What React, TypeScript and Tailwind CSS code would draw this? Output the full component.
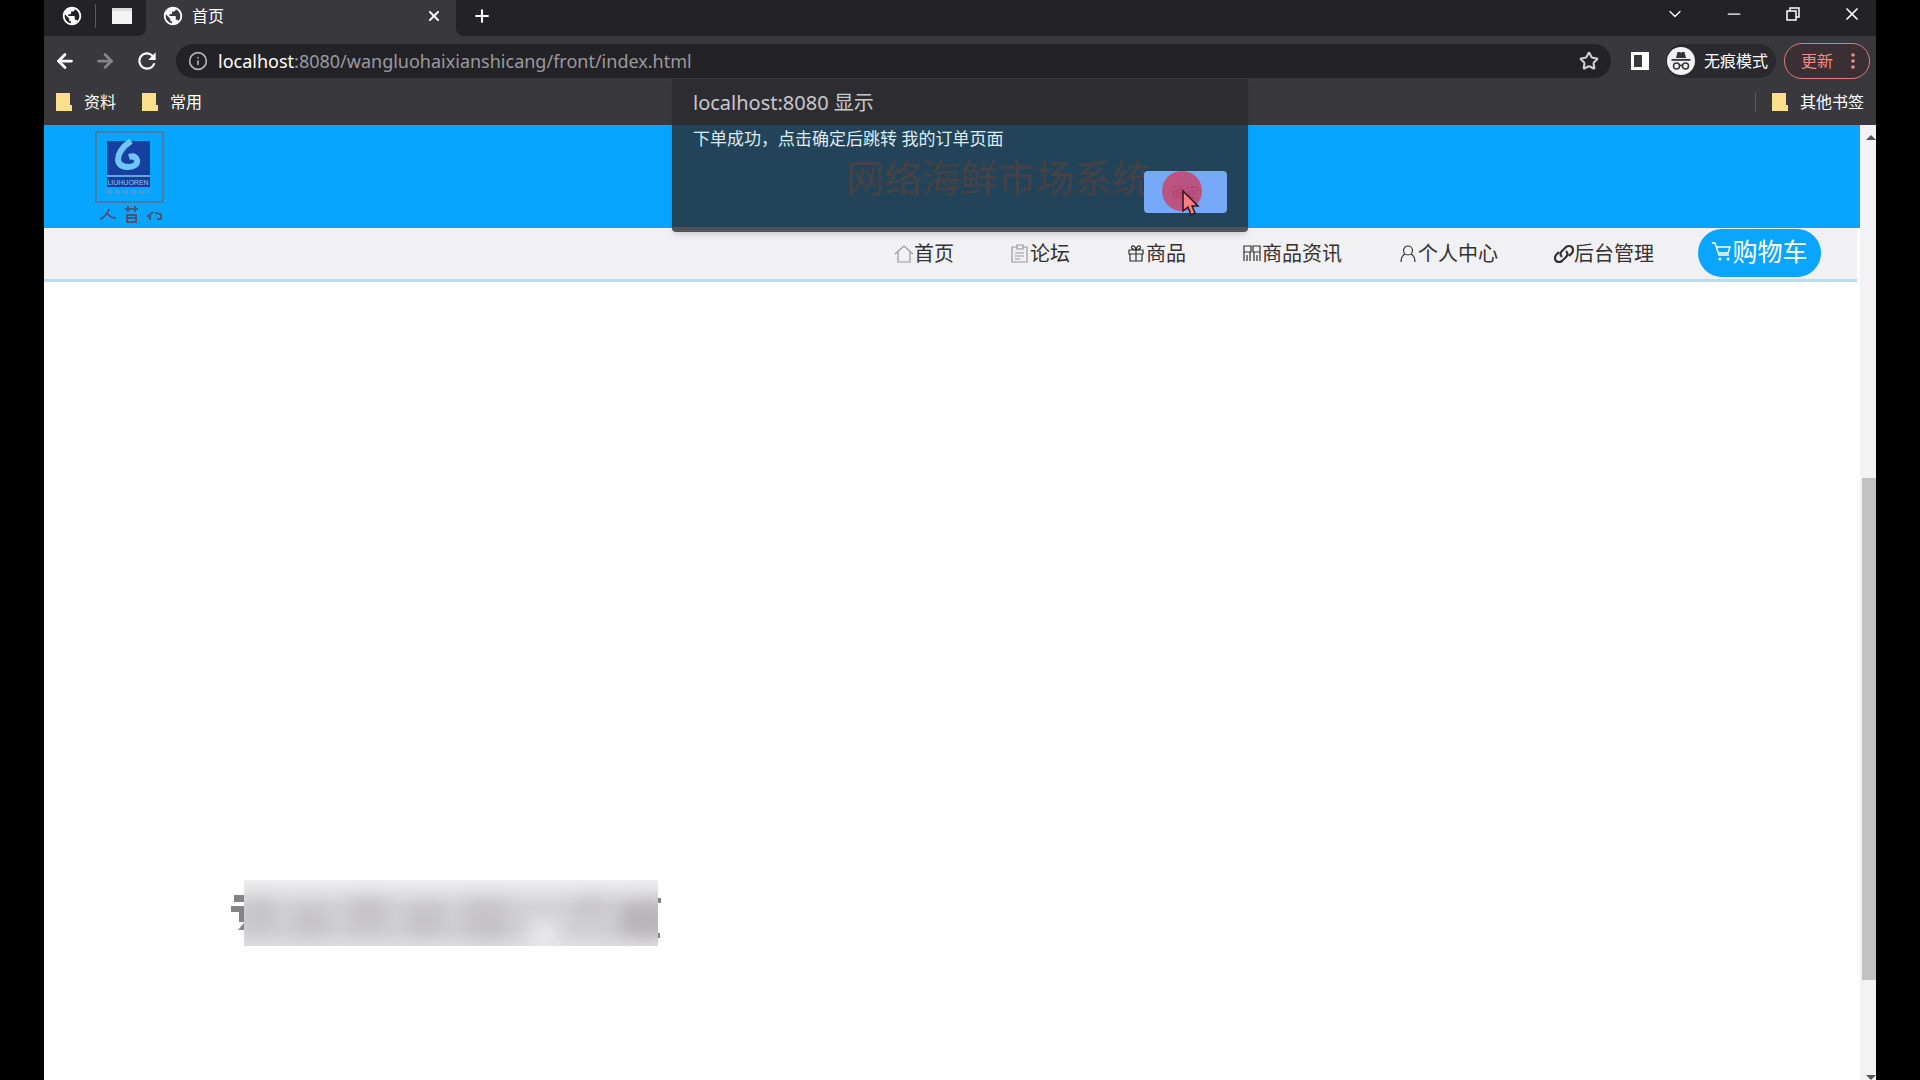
import { useState } from "react";
import type { ReactNode } from "react";
import { ArrowLeft, ArrowRight, Star, X, Plus, Minus, ChevronDown, Info } from "lucide-react";
import { MdRefresh, MdPublic } from "react-icons/md";

const uiFont = "font-['Noto_Sans','Noto_Sans_CJK_SC',sans-serif]";

const Folder = () => (
  <svg width="16" height="18" viewBox="0 0 16 18" aria-hidden="true">
    <path d="M0 0h14v12h2v6H0z" fill="#fbe08c" />
  </svg>
);

const Bookmark = ({ label }: { label: string }) => (
  <a href="#bookmark" className="flex items-center gap-3 text-base leading-5 text-white">
    <Folder />
    {label}
  </a>
);

const TabStrip = () => (
  <div className="flex h-9 items-stretch bg-[#39393d] text-white">
    <div className="flex w-[102px] items-center rounded-br-lg bg-[#232227] pb-1 pl-[17px]">
      <MdPublic className="h-[22px] w-[22px]" />
      <span className="ml-3 h-6 w-px bg-[#5a5a5e]" />
      <svg className="ml-4" width="20" height="16" aria-hidden="true">
        <rect width="20" height="16" fill="#f4f4f4" />
        <rect width="20" height="3" fill="#dcdcdc" />
      </svg>
    </div>
    <div className="flex w-[310px] items-center pr-[14px] pb-1 pl-4">
      <MdPublic className="h-[22px] w-[22px]" />
      <span className="ml-2 flex-1 text-base leading-5">首页</span>
      <button aria-label="关闭标签页">
        <X className="h-4 w-4" strokeWidth={3} />
      </button>
    </div>
    <div className="flex flex-1 items-center justify-between rounded-bl-lg bg-[#232227] pb-1 pl-4">
      <button aria-label="新标签页">
        <Plus className="h-5 w-5" strokeWidth={2.5} />
      </button>
      <div className="flex items-center gap-[39px] pr-[14px] pb-1">
        <button aria-label="搜索标签页">
          <ChevronDown className="h-5 w-5" strokeWidth={1.5} />
        </button>
        <button aria-label="最小化">
          <Minus className="h-5 w-5" strokeWidth={1.5} />
        </button>
        <button aria-label="还原">
          <svg className="h-5 w-5" viewBox="0 0 20 20" fill="none" stroke="currentColor" strokeWidth="1.5">
            <path d="M4 7h9v9H4zM7 7V4h9v9h-3" />
          </svg>
        </button>
        <button aria-label="关闭">
          <X className="h-5 w-5" strokeWidth={2} />
        </button>
      </div>
    </div>
  </div>
);

const AddressBar = () => (
  <div className="flex h-[50px] items-center px-[6px] text-white">
    <div className="flex w-[126px] items-center gap-[18px] pl-1">
      <button aria-label="后退">
        <ArrowLeft className="h-[22px] w-[22px]" strokeWidth={3} />
      </button>
      <button aria-label="前进" className="text-[#85858a]">
        <ArrowRight className="h-[22px] w-[22px]" strokeWidth={3} />
      </button>
      <button aria-label="重新加载">
        <MdRefresh className="h-[26px] w-[26px]" />
      </button>
    </div>
    <div className="flex h-[34px] flex-1 items-center rounded-full bg-[#232227] px-3">
      <Info className="h-5 w-5 text-[#b5b5b8]" strokeWidth={2} />
      <a href="#url" className="ml-[10px] flex-1 text-lg leading-6 text-[#9a9a9e]">
        <span className="text-white">localhost</span>:8080/wangluohaixianshicang/front/index.html
      </a>
      <button aria-label="收藏">
        <Star className="h-5 w-5 text-[#d0d0d3]" strokeWidth={2.5} />
      </button>
    </div>
    <button aria-label="侧边栏" className="ml-5">
      <svg width="18" height="18" aria-hidden="true">
        <rect x="1.5" y="1.5" width="15" height="15" fill="none" stroke="#fff" strokeWidth="3" />
        <rect x="11" width="7" height="18" fill="#fff" />
      </svg>
    </button>
    <div className="ml-[17px] flex h-[34px] w-[110px] items-center gap-2 rounded-full bg-[#2a292e] text-base">
      <svg width="30" height="30" viewBox="0 0 30 30" aria-hidden="true">
        <circle cx="15" cy="15" r="14" fill="#f3f3f3" />
        <g fill="#333338">
          <path d="M10 12l1.500-6h2l1.500.8 1.500-.8h2l1.500 6z" />
          <path d="M5.500 13h19v1.800h-19z" />
        </g>
        <g fill="none" stroke="#333338" strokeWidth="1.500">
          <circle cx="10.500" cy="20" r="3" />
          <circle cx="19.500" cy="20" r="3" />
          <path d="M13.500 20q1.500-1.500 3 0" />
        </g>
      </svg>
      <span className="whitespace-nowrap">无痕模式</span>
    </div>
    <button className="ml-2 flex h-9 w-[86px] items-center justify-between rounded-full border border-[#e07b80] bg-[#3a2f33] pr-[14px] pl-4 text-base text-[#f28b8e]">
      更新
      <svg width="4" height="18" fill="#f28b8e" aria-hidden="true">
        <circle cx="2" cy="3" r="1.800" />
        <circle cx="2" cy="9" r="1.800" />
        <circle cx="2" cy="15" r="1.800" />
      </svg>
    </button>
  </div>
);

const BookmarkBar = () => (
  <div className="flex h-[39px] items-start gap-[26px] pt-[6px] pr-3 pl-3">
    <Bookmark label="资料" />
    <div className="flex-1">
      <Bookmark label="常用" />
    </div>
    <div className="flex border-l border-[#5a5a5e] pl-4">
      <Bookmark label="其他书签" />
    </div>
  </div>
);

const Logo = () => (
  <svg width="70" height="96" viewBox="0 0 70 96" role="img" aria-label="logo">
    <rect x="2" y="3" width="67" height="70" fill="none" stroke="#58708f" strokeWidth="1.500" />
    <rect x="13" y="12" width="43" height="46" fill="#1540a0" />
    <path d="M37 12Q24 21 24 31Q25 38 35 38Q44 37 43 31Q41 26 35 28" fill="none" stroke="#6fc4fa" strokeWidth="6" />
    <path d="M13 47h43" stroke="#7cc8f5" strokeWidth="1.500" />
    <text x="34" y="56" textAnchor="middle" fontSize="7" fill="#8fc6ee" fontFamily="Liberation Sans">
      LIUHUOREN
    </text>
    <path d="M13 63h42" stroke="#5f95c4" strokeWidth="3" strokeDasharray="5 3" />
    <g fill="none" stroke="#4d5575" strokeWidth="2">
      <path d="M6 90q6-2 9-10M13 84q3 5 9 5M31 80h13M34 77v6M41 77v6M33 86h9v7h-9zM33 89h9M53 88l6-5M56 86v5M61 84l6 1M63 90h4v-5" />
    </g>
  </svg>
);

const stroke = { fill: "none", stroke: "currentColor", strokeWidth: 1.2 };

const navItems: { label: string; icon: ReactNode }[] = [
  { label: "首页", icon: <path {...stroke} stroke="#999" d="M1 10l9-8 9 8M4 8v10h12V8" /> },
  { label: "论坛", icon: <path {...stroke} stroke="#999" d="M7 3H2v15h15V3h-4M7 1h6v4H7zM5 9h9M5 12h9M5 15h5" /> },
  { label: "商品", icon: <path {...stroke} d="M3 6h14v4H3zM4 10v7h12v-7M10 6v11M10 6Q4 5 6 2q3-1 4 4q1-5 4-4q2 3-4 4" /> },
  { label: "商品资讯", icon: <path {...stroke} d="M2 2h7v6H2zM11 2h7v6h-7zM2 8v9M8 8v9M12 8v9M18 8v9M5 11v6M15 11v6" /> },
  { label: "个人中心", icon: <path {...stroke} d="M10 2a4.500 4.500 0 1 1 0 9a4.500 4.500 0 0 1 0-9M7 10q-4 2-4 8M13 10q4 2 4 8" /> },
  {
    label: "后台管理",
    icon: <path {...stroke} strokeWidth={2.2} d="M8 13q-3-3 0-6l4-4q3-2 6 0q2 3 0 6l-3 3M12 7q3 3 0 6l-4 4q-3 2-6 0q-2-3 0-6l3-3" />,
  },
];

const SiteNav = () => (
  <nav className="mr-[3px] flex h-[54px] items-start justify-end gap-14 border-b-[3px] border-[#b5dbf5] bg-[#f1f0f2] pt-px pr-9 text-xl text-[#333]">
    {navItems.map((item) => (
      <a key={item.label} href="#nav" className="flex h-[50px] items-center leading-6">
        <svg width="20" height="20" viewBox="0 0 20 20" aria-hidden="true">
          {item.icon}
        </svg>
        {item.label}
      </a>
    ))}
    <a
      href="#cart"
      className="-ml-3 flex h-12 w-[123px] items-center justify-center rounded-full bg-[#0aa5ff] pb-1 text-[25px] leading-8 text-white"
    >
      <svg width="21" height="20" viewBox="0 0 21 20" aria-hidden="true">
        <path {...stroke} strokeWidth={1.5} d="M1 2h3l4 12h10M5 6h14l-2 6H7" />
        <circle cx="9" cy="18" r="1.500" fill="currentColor" />
        <circle cx="17" cy="18" r="1.500" fill="currentColor" />
      </svg>
      购物车
    </a>
  </nav>
);

// Blurred-out strip, only the ends of the line behind it stick out
const Mosaic = () => (
  <svg width="434" height="66" viewBox="0 0 434 66" aria-hidden="true">
    <defs>
      <linearGradient id="fade" x1="0" y1="0" x2="0" y2="1">
        <stop offset="0" stopColor="#efeff1" />
        <stop offset="0.4" stopColor="#d2d1d4" />
        <stop offset="0.75" stopColor="#d0cfd2" />
        <stop offset="1" stopColor="#dddcdf" />
      </linearGradient>
      <filter id="soft" x="-50%" y="-50%" width="200%" height="200%">
        <feGaussianBlur stdDeviation="9" />
      </filter>
      <clipPath id="strip">
        <rect x="14" width="414" height="66" />
      </clipPath>
    </defs>
    <path d="M4 15h12v7H4zM1 26h14v6H1zM9 32h6v10H9zM8 50l6-7v7zM428 18h3v5h-3zM428 53h2v5h-2z" fill="#848387" />
    <g clipPath="url(#strip)">
      <rect x="14" width="414" height="66" fill="url(#fade)" />
      <g filter="url(#soft)" fill="#bcbabe" opacity="0.6">
        <rect x="14" y="20" width="30" height="30" />
        <rect x="65" y="26" width="32" height="28" />
        <rect x="120" y="18" width="36" height="32" />
        <rect x="178" y="24" width="36" height="30" />
        <rect x="235" y="20" width="42" height="38" />
        <rect x="345" y="18" width="30" height="18" />
        <rect x="390" y="22" width="50" height="34" fill="#a5a2a5" />
      </g>
      <g filter="url(#soft)" fill="#efeef0" opacity="0.8">
        <rect x="300" y="40" width="30" height="30" />
      </g>
    </g>
  </svg>
);

const Scrollbar = () => (
  <div className="flex w-4 flex-col items-center bg-[#f3f2f4]" aria-hidden="true">
    <svg width="16" height="24">
      <path d="M6 15h10l-5-5z" fill="#555" />
    </svg>
    <div className="w-full flex-[329]" />
    <div className="w-[14px] flex-[502] self-end bg-[#c3c1c4]" />
    <div className="w-full flex-[95]" />
    <svg width="16" height="5">
      <path d="M6 0h10l-5 5z" fill="#555" />
    </svg>
  </div>
);

const AlertDialog = ({ onClose }: { onClose: () => void }) => (
  <div
    role="alertdialog"
    aria-labelledby="alert-title"
    className="absolute top-[79px] left-1/2 flex h-[153px] w-[576px] -translate-x-1/2 flex-col rounded-b border-b-[5px] border-[#505257] bg-[#2b2b2e]/80 px-[21px] pt-3 text-[17px] text-[#dcecf5] shadow-md"
  >
    <h2 id="alert-title" className="text-xl leading-6 text-[#c8c8cb]">
      localhost:8080 显示
    </h2>
    <p className="mt-3 leading-6 whitespace-nowrap">下单成功，点击确定后跳转 我的订单页面</p>
    <button
      onClick={onClose}
      className="relative mt-5 h-[42px] w-[83px] shrink-0 self-end rounded bg-[#76a9f8] text-sm text-[#2d456e]"
    >
      确定
      <svg className="absolute top-0 left-[17px]" width="42" height="46" viewBox="0 0 42 46" aria-hidden="true">
        <circle cx="21" cy="20" r="20" fill="#c8456c" fillOpacity="0.850" />
        <path d="M22 20v20l5-4 3 8 4-2-3-7h6z" fill="#fa7d80" stroke="#2b1720" strokeWidth="1.500" />
      </svg>
    </button>
  </div>
);

export default function App() {
  const [alertOpen, setAlertOpen] = useState(true);

  return (
    <div className={`min-h-screen bg-black px-11 ${uiFont}`}>
      <div className="relative flex min-h-screen flex-col bg-white">
        <div className="bg-[#39393d]">
          <TabStrip />
          <AddressBar />
          <BookmarkBar />
        </div>

        <div className="flex flex-1">
          <div className="flex-1">
            <header className="flex h-[103px] items-center bg-[#08a5ff] pl-[50px]">
              <Logo />
              <h1 className="flex-1 pr-9 pl-2 text-center text-[38px] leading-10 text-[#b0a0a0]">
                网络海鲜市场系统
              </h1>
            </header>
            <SiteNav />
            <main className="px-[186px] pt-[598px]">
              <Mosaic />
            </main>
          </div>
          <Scrollbar />
        </div>

        {alertOpen && <AlertDialog onClose={() => setAlertOpen(false)} />}
      </div>
    </div>
  );
}
